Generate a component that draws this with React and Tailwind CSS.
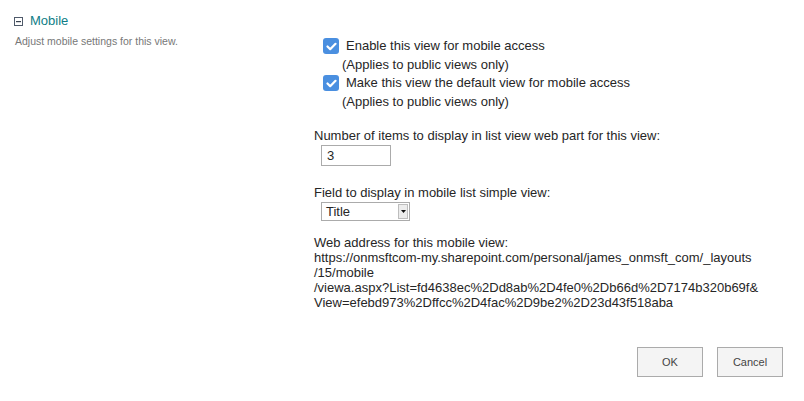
import {useState} from "react";

function CheckBox({checked, onChange}) {
    return (
        <button
            type="button"
            onClick={onChange}
            className="flex h-[16px] w-[16px] shrink-0 items-center justify-center rounded-[3px] bg-[#4a8fe0]"
        >
            {checked && (
                <svg width="11" height="9" viewBox="0 0 11 9">
                    <path d="M1.5 4.5 L4.2 7.2 L9.5 1.8" fill="none" stroke="#fff" strokeWidth="2.2" strokeLinecap="round" strokeLinejoin="round" />
                </svg>
            )}
        </button>
    );
}

function App() {
    const [enabled, setEnabled] = useState(true);
    const [isDefault, setIsDefault] = useState(true);
    const [count, setCount] = useState("3");
    const [field, setField] = useState("Title");

    return (
        <div className="h-[401px] w-[804px] bg-white font-['Liberation_Sans',Arial,sans-serif] text-[13px] text-[#262626]">
            <div className="flex">
                <div className="w-[314px] shrink-0 pl-[14px] pt-[13px]">
                    <div className="flex items-center gap-[7px]">
                        <svg width="9" height="9" viewBox="0 0 9 9">
                            <rect x="0.5" y="0.5" width="8" height="8" fill="#fff" stroke="#4f5a6a" />
                            <rect x="2" y="4" width="5" height="1.2" fill="#39424f" />
                        </svg>
                        <span className="text-[13px] leading-[16px] text-[#0f7d86]">Mobile</span>
                    </div>
                    <p className="mt-[6px] pl-[1px] text-[10.5px] leading-[12px] text-[#777]">
                        Adjust mobile settings for this view.
                    </p>
                </div>

                <div className="pt-[38px]">
                    <div className="flex items-center gap-[7px] pl-[9px]">
                        <CheckBox checked={enabled} onChange={() => setEnabled(!enabled)} />
                        <span className="leading-[16px]">Enable this view for mobile access</span>
                    </div>
                    <div className="pl-[28px] pt-[2px] leading-[18px]">(Applies to public views only)</div>
                    <div className="mt-[1px] flex items-center gap-[7px] pl-[9px]">
                        <CheckBox checked={isDefault} onChange={() => setIsDefault(!isDefault)} />
                        <span className="leading-[16px]">Make this view the default view for mobile access</span>
                    </div>
                    <div className="pl-[28px] pt-[2px] leading-[18px]">(Applies to public views only)</div>

                    <div className="mt-[17px] leading-[16px]">Number of items to display in list view web part for this view:</div>
                    <div className="pl-[7px] pt-[1px]">
                        <input
                            value={count}
                            onChange={(e) => setCount(e.target.value)}
                            className="h-[21px] w-[70px] border border-[#ababab] px-[5px] text-[13px] text-[#262626] outline-none"
                        />
                    </div>

                    <div className="mt-[19px] leading-[16px]">Field to display in mobile list simple view:</div>
                    <div className="pl-[7px] pt-[1px]">
                        <div className="flex h-[19px] w-[89px] items-center border border-[#ababab] bg-white">
                            <span className="flex-1 pl-[4px] leading-[16px]">{field}</span>
                            <span
                                onClick={() => setField("Title")}
                                className="mr-[1px] flex h-[15px] w-[10px] items-center justify-center border border-[#bdbdbd] bg-[#ececec]"
                            >
                                <svg width="5" height="3" viewBox="0 0 5 3">
                                    <path d="M0 0 H5 L2.5 3 Z" fill="#111" />
                                </svg>
                            </span>
                        </div>
                    </div>

                    <div className="mt-[14px] leading-[15px]">
                        <div>Web address for this mobile view:</div>
                        <div>https://onmsftcom-my.sharepoint.com/personal/james_onmsft_com/_layouts</div>
                        <div>/15/mobile</div>
                        <div>/viewa.aspx?List=fd4638ec%2Dd8ab%2D4fe0%2Db66d%2D7174b320b69f&amp;</div>
                        <div>View=efebd973%2Dffcc%2D4fac%2D9be2%2D23d43f518aba</div>
                    </div>
                </div>
            </div>

            <div className="mt-[37px] flex justify-end gap-[14px] pr-[21px]">
                <button type="button" className="h-[30px] w-[66px] border border-[#ababab] bg-[#f4f4f4] text-[11px] text-[#444]">
                    OK
                </button>
                <button type="button" className="h-[30px] w-[66px] border border-[#ababab] bg-[#f4f4f4] text-[11px] text-[#444]">
                    Cancel
                </button>
            </div>
        </div>
    );
}

export default App;
